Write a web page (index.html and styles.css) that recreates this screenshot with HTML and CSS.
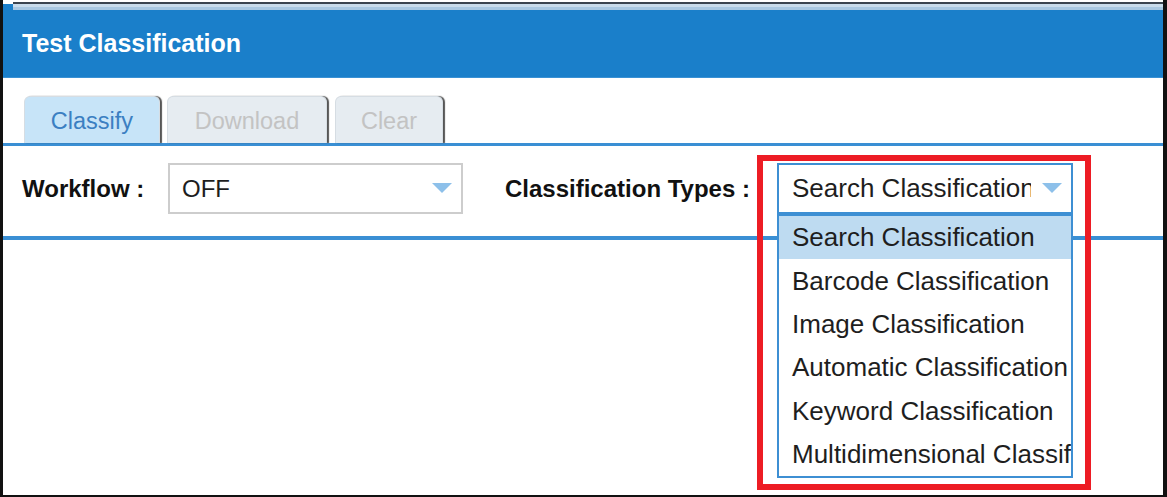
FILE: index.html
```html
<!DOCTYPE html>
<html>
<head>
<meta charset="utf-8">
<link rel="stylesheet" href="styles.css">
</head>
<body>
<div class="frame">
  <div class="header">
    <div class="header-strip"></div>
    <div class="header-title">Test Classification</div>
  </div>
  <div class="tabs">
    <div class="tab tab-active tab-classify">Classify</div>
    <div class="tab tab-disabled tab-download">Download</div>
    <div class="tab tab-disabled tab-clear">Clear</div>
  </div>
  <div class="form-row">
    <div class="label label-workflow">Workflow :</div>
    <div class="select select-grey">
      <span class="select-text">OFF</span>
      <span class="arrow"></span>
    </div>
    <div class="label label-types">Classification Types :</div>
    <div class="select-wrap">
      <div class="select select-blue">
        <span class="select-text select-text-clip">Search Classification</span>
        <span class="arrow"></span>
      </div>
      <ul class="menu">
        <li class="menu-item menu-item-active">Search Classification</li>
        <li class="menu-item">Barcode Classification</li>
        <li class="menu-item">Image Classification</li>
        <li class="menu-item">Automatic Classification</li>
        <li class="menu-item">Keyword Classification</li>
        <li class="menu-item">Multidimensional Classification</li>
      </ul>
    </div>
  </div>
  <div class="annotation"></div>
</div>
</body>
</html>
```

FILE: styles.css
```css
html, body {
  margin: 0;
  padding: 0;
  background: #ffffff;
}

body {
  font-family: "Liberation Sans", Arial, sans-serif;
  color: #1e1e1e;
}

.frame {
  position: relative;
  width: 1167px;
  height: 497px;
  box-sizing: border-box;
  border-left: 3px solid #111111;
  border-right: 4px solid #111111;
  border-bottom: 2px solid #111111;
  overflow: hidden;
}

.header {
  margin-top: 2px;
  padding-left: 10px;
  background: linear-gradient(to bottom, #ffffff 0, #ffffff 2px, #1a7fca 2px, #1a7fca 100%);
}

.header-strip {
  height: 6px;
  border-top: 2px solid #3a4450;
  background: linear-gradient(to bottom, #c9dcec 0, #c9dcec 50%, #a9c8e2 50%, #a9c8e2 100%);
}

.header-title {
  height: 68px;
  display: flex;
  align-items: center;
  margin-left: -10px;
  padding-left: 19px;
  font-size: 25px;
  font-weight: bold;
  color: #ffffff;
  background: #1a7fca;
  border-bottom: 1px solid #3a91d4;
  box-sizing: border-box;
}

.tabs {
  display: flex;
  align-items: flex-end;
  margin-top: 18px;
  padding-left: 21px;
  height: 47px;
  border-bottom: 3px solid #3a8fd4;
}

.tab {
  height: 47px;
  box-sizing: border-box;
  margin-right: 7px;
  display: flex;
  align-items: center;
  justify-content: center;
  padding-top: 3px;
  font-size: 23.5px;
  border: 1px solid #d6dde3;
  border-bottom: none;
  border-radius: 6px 6px 0 0;
  box-shadow: 2px 0 1px rgba(30, 30, 30, 0.75);
}

.tab-classify {
  width: 136px;
}

.tab-download {
  width: 160px;
  margin-right: 8px;
}

.tab-clear {
  width: 108px;
}

.tab-active {
  background: #c7e4f8;
  color: #3b7fc2;
}

.tab-disabled {
  background: #e6ecf1;
  color: #c3c3c3;
}

.form-row {
  display: flex;
  align-items: center;
  padding: 17px 0 22px 19px;
  border-bottom: 4px solid #3a8fd4;
}

.label {
  font-size: 24px;
  font-weight: bold;
  color: #111111;
  margin-right: 22px;
  white-space: nowrap;
}

.label-workflow {
  width: 124px;
}

.label-types {
  width: 250px;
  margin-left: 42px;
}

.select {
  position: relative;
  height: 51px;
  box-sizing: border-box;
  display: flex;
  align-items: center;
  background: #ffffff;
}

.select-grey {
  width: 295px;
  border: 2px solid #cdcdcd;
  padding-left: 12px;
  font-size: 24px;
}

.select-wrap {
  position: relative;
  width: 296px;
}

.select-blue {
  width: 296px;
  border: 2px solid #3d8fd3;
  padding-left: 13px;
  font-size: 26px;
}

.select-text {
  white-space: nowrap;
  color: #1e1e1e;
}

.select-text-clip {
  display: block;
  width: 239px;
  overflow: hidden;
}

.arrow {
  position: absolute;
  right: 9px;
  top: 18px;
  width: 0;
  height: 0;
  border-left: 10px solid transparent;
  border-right: 10px solid transparent;
  border-top: 10px solid #8dc0ea;
}

.menu {
  position: absolute;
  left: 0;
  top: 100%;
  width: 296px;
  box-sizing: border-box;
  margin: 0;
  padding: 0;
  list-style: none;
  background: #ffffff;
  border: 2px solid #3d8fd3;
  z-index: 2;
}

.menu-item {
  height: 43.4px;
  display: flex;
  align-items: center;
  padding-left: 13px;
  font-size: 26px;
  white-space: nowrap;
  overflow: hidden;
  color: #1e1e1e;
}

.menu-item-active {
  background: #bedbf1;
}

.annotation {
  position: absolute;
  left: 754px;
  top: 155px;
  width: 334px;
  height: 335px;
  box-sizing: border-box;
  border: 6px solid #ed1c24;
  z-index: 3;
  pointer-events: none;
}
```
